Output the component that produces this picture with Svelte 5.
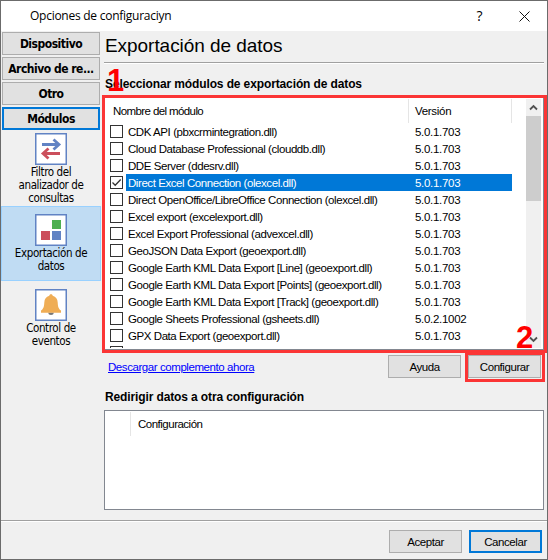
<script lang="ts">
	const tabs = ['Dispositivo', 'Archivo de re...', 'Otro', 'Módulos'];
	const items = [
		{ icon: 'arrows', lines: ['Filtro del', 'analizador de', 'consultas'] },
		{ icon: 'blocks', lines: ['Exportación de', 'datos'] },
		{ icon: 'bell', lines: ['Control de', 'eventos'] }
	];
	const modules = [
		{ name: 'CDK API (pbxcrmintegration.dll)', version: '5.0.1.703' },
		{ name: 'Cloud Database Professional (clouddb.dll)', version: '5.0.1.703' },
		{ name: 'DDE Server (ddesrv.dll)', version: '5.0.1.703' },
		{ name: 'Direct Excel Connection (olexcel.dll)', version: '5.0.1.703' },
		{ name: 'Direct OpenOffice/LibreOffice Connection (olexcel.dll)', version: '5.0.1.703' },
		{ name: 'Excel export (excelexport.dll)', version: '5.0.1.703' },
		{ name: 'Excel Export Professional (advexcel.dll)', version: '5.0.1.703' },
		{ name: 'GeoJSON Data Export (geoexport.dll)', version: '5.0.1.703' },
		{ name: 'Google Earth KML Data Export [Line] (geoexport.dll)', version: '5.0.1.703' },
		{ name: 'Google Earth KML Data Export [Points] (geoexport.dll)', version: '5.0.1.703' },
		{ name: 'Google Earth KML Data Export [Track] (geoexport.dll)', version: '5.0.1.703' },
		{ name: 'Google Sheets Professional (gsheets.dll)', version: '5.0.2.1002' },
		{ name: 'GPX Data Export (geoexport.dll)', version: '5.0.1.703' },
		{ name: '', version: '' }
	];
	let activeTab = $state(3);
	let activeItem = $state(1);
	let selected = $state(3);
</script>

<div class="window">
	<header>
		<span class="caption">Opciones de configuraciyn</span>
		<span class="help">?</span>
		<svg class="close" width="11" height="11" viewBox="0 0 11 11">
			<path d="M.5 .5l10 10M10.5 .5l-10 10" stroke="#111" fill="none" />
		</svg>
	</header>

	<div class="body">
		<nav>
			{#each tabs as tab, i}
				<button class="tab" class:active={i === activeTab} onclick={() => (activeTab = i)}>{tab}</button>
			{/each}
			{#each items as item, i}
				<button class="item" class:current={i === activeItem} onclick={() => (activeItem = i)}>
					<svg width="32" height="32" viewBox="0 0 32 32">
						<rect x=".75" y=".75" width="30.5" height="30.5" fill="#fff" stroke="#6183c4" stroke-width="1.5" />
						{#if item.icon === 'arrows'}
							<path d="M7 11.5h17M18.5 6.5l5.5 5-5.5 5" fill="none" stroke="#6183c4" stroke-width="2.8" />
							<path d="M25 20.5H8M13.5 15.500l-5.500 5 5.500 5" fill="none" stroke="#cb4f5c" stroke-width="2.8" />
						{:else if item.icon === 'blocks'}
							<rect x="17" y="6" width="9" height="9" fill="#4daf50" />
							<rect x="6" y="17" width="9" height="9" fill="#cb4f5c" />
							<rect x="17" y="17" width="9" height="9" fill="#6183c4" />
						{:else}
							<path d="M13 23.5h6q-.5 2.5-3 2.5t-3-2.5z" fill="#777" />
							<path
								d="M16 5.200c1 0 1.700.6 1.700 1.600 3.300.9 4.800 3.300 5 6.600.2 4.200.8 6.200 3.300 8.200v2.200H6v-2.200c2.500-2 3.100-4 3.300-8.200.2-3.300 1.700-5.700 5-6.600 0-1 .7-1.600 1.700-1.600z"
								fill="#efad55"
							/>
						{/if}
					</svg>
					{#each item.lines as line}
						<span>{line}</span>
					{/each}
				</button>
			{/each}
		</nav>

		<main>
			<h1>Exportación de datos</h1>
			<h2>Seleccionar módulos de exportación de datos</h2>

			<div class="list">
				<div class="table">
					<div class="head">
						<span class="name">Nombre del módulo</span>
						<span class="version">Versión</span>
					</div>
					{#each modules as module, i}
						<div class="row" class:selected={i === selected} onclick={() => (selected = i)} role="presentation">
							<svg class="check" width="13" height="13" viewBox="0 0 13 13">
								<rect x=".5" y=".5" width="12" height="12" fill="#fff" stroke="#333" />
								{#if i === selected}
									<path d="M2.5 6.5l2.7 2.7 5.5-5.7" fill="none" stroke="#333" stroke-width="1.3" />
								{/if}
							</svg>
							<span class="name">{module.name}</span>
							<span class="version">{module.version}</span>
						</div>
					{/each}
				</div>
				<div class="scrollbar">
					<svg width="15" height="17" viewBox="0 0 15 17">
						<path d="M4 10.5l3.5-3.5 3.5 3.5" fill="none" stroke="#505050" stroke-width="1.8" />
					</svg>
					<div class="thumb"></div>
					<svg width="15" height="17" viewBox="0 0 15 17">
						<path d="M4 6.5l3.5 3.5 3.5-3.5" fill="none" stroke="#505050" stroke-width="1.8" />
					</svg>
				</div>
			</div>

			<div class="actions">
				<a href="#addon">Descargar complemento ahora</a>
				<button class="push">Ayuda</button>
				<button class="push">Configurar</button>
			</div>

			<h2 class="redirect">Redirigir datos a otra configuración</h2>
			<div class="targets">
				<div class="targets-head"><span>Configuración</span></div>
			</div>
		</main>
	</div>

	<footer>
		<button class="push">Aceptar</button>
		<button class="push default">Cancelar</button>
	</footer>

	<!-- tutorial marks over the dialog -->
	<div class="mark mark-list"></div>
	<div class="mark mark-button"></div>
	<span class="step step-one">1</span>
	<span class="step step-two">2</span>
</div>

<style>
	:global(body) {
		margin: 0;
	}
	.window {
		position: relative;
		box-sizing: border-box;
		width: 548px;
		height: 560px;
		border: 1px solid #6b6b6b;
		background: #f0f0f0;
		color: #000;
		font: 11.5px/17px 'Liberation Sans', Arial, sans-serif;
		letter-spacing: -0.43px;
		display: flex;
		flex-direction: column;
		overflow: hidden;
		white-space: nowrap;
	}
	header {
		display: flex;
		align-items: center;
		height: 30px;
		padding: 0 17px 0 29px;
		background: #fff;
	}
	.caption {
		flex: 1;
		font: 12px/16px 'Open Sans', sans-serif;
		letter-spacing: -0.26px;
	}
	.help {
		font: 14px/16px 'Open Sans', sans-serif;
		margin-right: 37px;
	}
	.body {
		display: flex;
		height: 489px;
	}
	button {
		font: inherit;
		letter-spacing: inherit;
		color: inherit;
		padding: 0;
		margin: 0;
		box-sizing: border-box;
	}
	nav {
		width: 100px;
		display: flex;
		flex-direction: column;
		font-family: 'DejaVu Sans Condensed', 'DejaVu Sans', sans-serif;
	}
	.tab {
		width: 98px;
		height: 23px;
		margin: 1px 0 1px 1px;
		padding-top: 1px;
		border: 1px solid #adadad;
		background: #e1e1e1;
		font-size: 12px;
		font-weight: bold;
		letter-spacing: -0.5px;
		line-height: 17px;
	}
	.tab.active {
		border: 2px solid #0078d7;
	}
	.item {
		display: flex;
		flex-direction: column;
		align-items: center;
		height: 75px;
		padding-top: 7px;
		border: 1px solid transparent;
		background: none;
		font-size: 11.5px;
		letter-spacing: -0.4px;
		line-height: 13px;
	}
	.item svg {
		margin-bottom: 1px;
		flex: none;
	}
	.item.current {
		border-color: #99d1ff;
		background: #c0dcf3;
	}
	.tab + .item {
		padding-top: 1px;
	}
	main {
		flex: 1;
		padding: 1px 3px 0;
	}
	h1 {
		margin: 0;
		height: 30px;
		padding-left: 1px;
		border-bottom: 1px solid #a0a0a0;
		box-shadow: 0 1px #fff;
		font-size: 19px;
		font-weight: normal;
		letter-spacing: -0.05px;
		line-height: 28px;
	}
	h2 {
		margin: 13px 0 4px 1px;
		font-size: 12px;
		font-weight: bold;
		letter-spacing: -0.12px;
		line-height: 17px;
	}
	.list {
		display: flex;
		box-sizing: border-box;
		height: 253px;
		border: 1px solid #828790;
		background: #fff;
		padding: 1px 2px 1px 1px;
		overflow: hidden;
	}
	.table {
		flex: 1;
		overflow: hidden;
	}
	.head {
		display: flex;
		width: 405px;
		height: 24px;
		border-right: 1px solid #e5e5e5;
		line-height: 24px;
	}
	.head .name {
		width: 295px;
		padding-left: 7px;
		border-right: 1px solid #e5e5e5;
		letter-spacing: -0.6px;
	}
	.version {
		padding-left: 6px;
		letter-spacing: -0.3px;
	}
	.row {
		display: flex;
		align-items: center;
		width: 406px;
		height: 17px;
	}
	.check {
		margin: 0 3px 0 4px;
		flex: none;
	}
	.row .name,
	.row .version {
		box-sizing: border-box;
		height: 17px;
		padding-top: 1px;
	}
	.row .name {
		width: 283px;
		padding-left: 2px;
	}
	.row .version {
		width: 103px;
		padding-left: 6px;
	}
	.selected .name,
	.selected .version {
		background: #0078d7;
		color: #fff;
	}
	.scrollbar {
		display: flex;
		flex-direction: column;
		width: 15px;
		background: #f0f0f0;
	}
	.scrollbar svg {
		flex: none;
	}
	.thumb {
		height: 85px;
		margin-bottom: auto;
		background: #cdcdcd;
	}
	.actions {
		display: flex;
		align-items: center;
		height: 23px;
		margin-top: 5px;
		padding-right: 3px;
	}
	a {
		margin: 1px auto 0 4px;
		color: #00f;
	}
	.push {
		width: 73px;
		height: 23px;
		padding-top: 1px;
		border: 1px solid #adadad;
		background: #e1e1e1;
		line-height: 17px;
	}
	.push + .push {
		margin-left: 7px;
	}
	.push.default {
		border: 2px solid #0078d7;
	}
	h2.redirect {
		margin: 11px 0 4px 1px;
	}
	.targets {
		box-sizing: border-box;
		height: 100px;
		border: 1px solid #828790;
		background: #fff;
		padding: 1px 25px;
	}
	.targets-head {
		height: 24px;
		border-left: 1px solid #e5e5e5;
		padding-left: 7px;
		letter-spacing: -0.5px;
		line-height: 25px;
	}
	footer {
		display: flex;
		box-sizing: border-box;
		justify-content: flex-end;
		align-items: flex-start;
		height: 39px;
		padding: 9px 5px 0;
		border-top: 1px solid #a0a0a0;
		box-shadow: inset 0 1px #fff;
	}
	.mark {
		position: absolute;
		box-sizing: border-box;
		border: 3px solid #fb3535;
	}
	.mark-list {
		left: 101px;
		top: 94px;
		width: 445px;
		height: 258px;
	}
	.mark-button {
		left: 464px;
		top: 351px;
		width: 80px;
		height: 30px;
	}
	.step {
		position: absolute;
		color: #f00;
		font-size: 31px;
		font-weight: bold;
		line-height: 31px;
	}
	.step-one {
		left: 106px;
		top: 64px;
	}
	.step-two {
		left: 515px;
		top: 321px;
	}
</style>
